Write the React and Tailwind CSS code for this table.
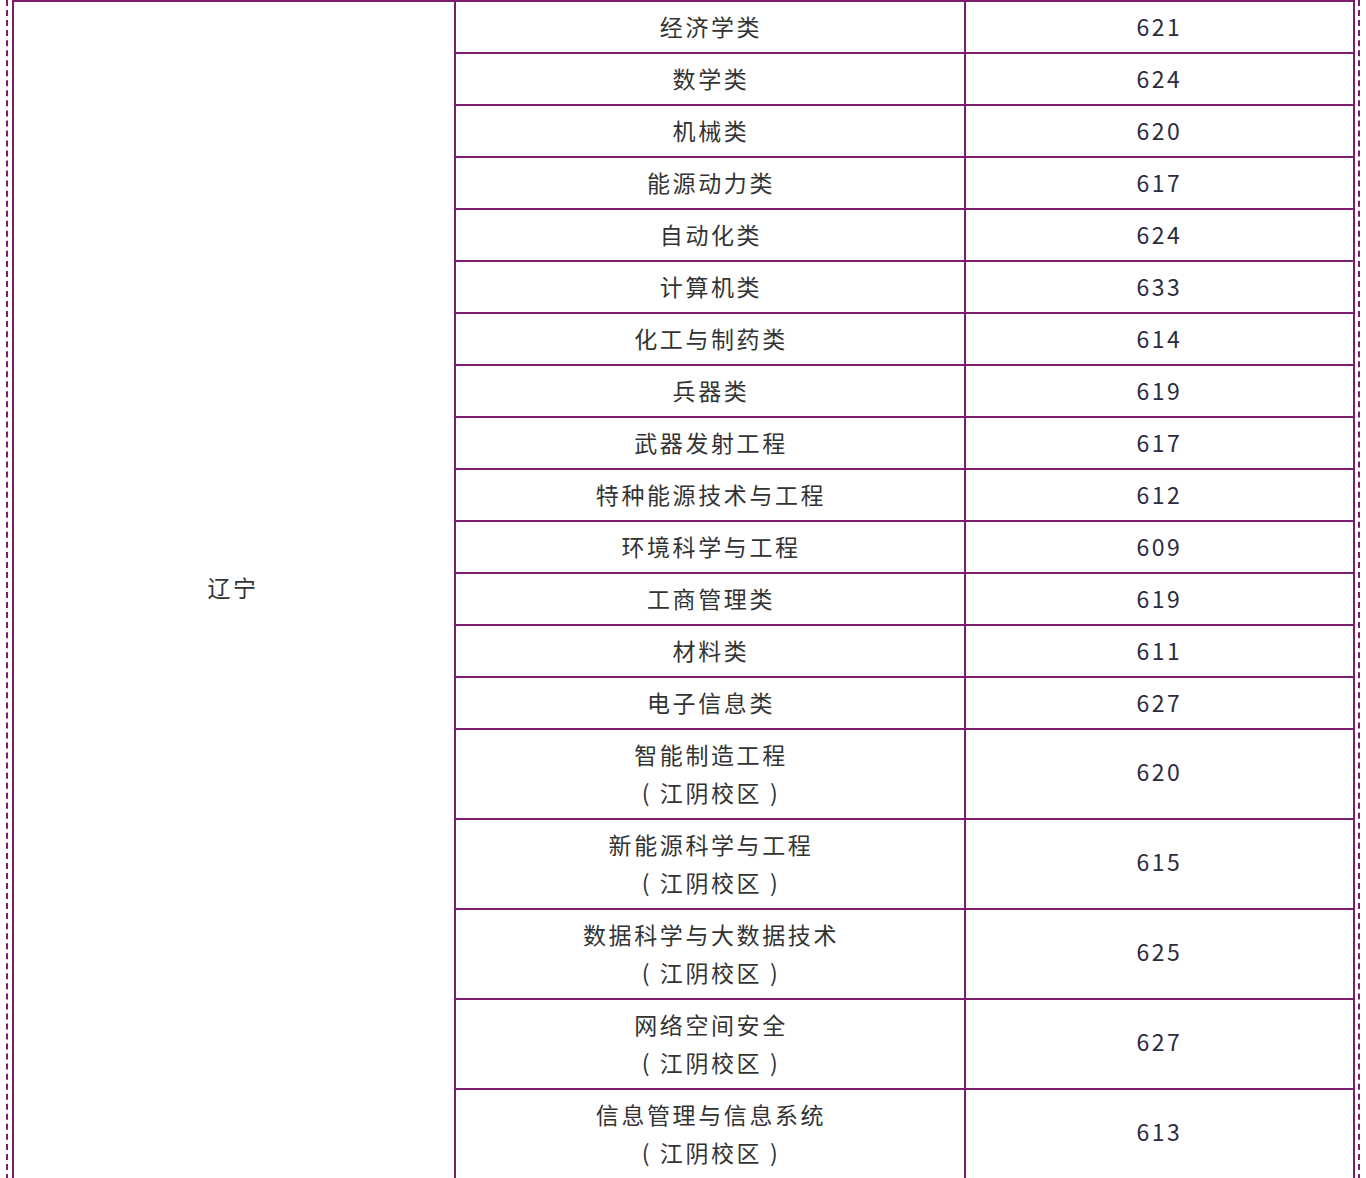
import React from "react";

const campus = "(\u00a0江阴校区\u00a0)";

const rows = [
  { name: ["经济学类"], score: "621" },
  { name: ["数学类"], score: "624" },
  { name: ["机械类"], score: "620" },
  { name: ["能源动力类"], score: "617" },
  { name: ["自动化类"], score: "624" },
  { name: ["计算机类"], score: "633" },
  { name: ["化工与制药类"], score: "614" },
  { name: ["兵器类"], score: "619" },
  { name: ["武器发射工程"], score: "617" },
  { name: ["特种能源技术与工程"], score: "612" },
  { name: ["环境科学与工程"], score: "609" },
  { name: ["工商管理类"], score: "619" },
  { name: ["材料类"], score: "611" },
  { name: ["电子信息类"], score: "627" },
  { name: ["智能制造工程", campus], score: "620" },
  { name: ["新能源科学与工程", campus], score: "615" },
  { name: ["数据科学与大数据技术", campus], score: "625" },
  { name: ["网络空间安全", campus], score: "627" },
  { name: ["信息管理与信息系统", campus], score: "613" },
];

export default function App() {
  return (
    <div
      className="w-[1366px] bg-white"
      style={{ fontFamily: '"Noto Sans CJK SC", "Noto Sans", sans-serif' }}
    >
      <div className="ml-[6px] w-[1354px] border-x-2 border-dashed border-[#7a1f6c] pl-[4px] pr-[3px]">
        <div className="flex border-t-2 border-x-2 border-[#7a1f6c]">
          <div className="w-[442px] shrink-0 border-r-2 border-[#7a1f6c] flex items-center justify-center pr-[2px]">
            <span className="text-[23px] tracking-[2.5px] text-[#333] pb-[8px]">辽宁</span>
          </div>
          <div className="flex-1 flex flex-col">
            {rows.map((r, i) => (
              <div
                key={i}
                className={
                  "flex border-b-2 border-[#7a1f6c] " +
                  (r.name.length > 1 ? "h-[90px]" : "h-[52px]")
                }
              >
                <div className="w-[510px] shrink-0 border-r-2 border-[#7a1f6c] flex flex-col items-center justify-center pb-[3px] pl-[2px] text-[23px] tracking-[2.6px] leading-[38px] text-[#333]">
                  {r.name.map((t, j) => (
                    <div key={j}>{t}</div>
                  ))}
                </div>
                <div className={"flex-1 flex items-center justify-center text-[23px] tracking-[2.5px] text-[#2a2c3e] " + (r.name.length > 1 ? "pb-[6px]" : "pb-[2px]")}>
                  {r.score}
                </div>
              </div>
            ))}
          </div>
        </div>
      </div>
    </div>
  );
}
